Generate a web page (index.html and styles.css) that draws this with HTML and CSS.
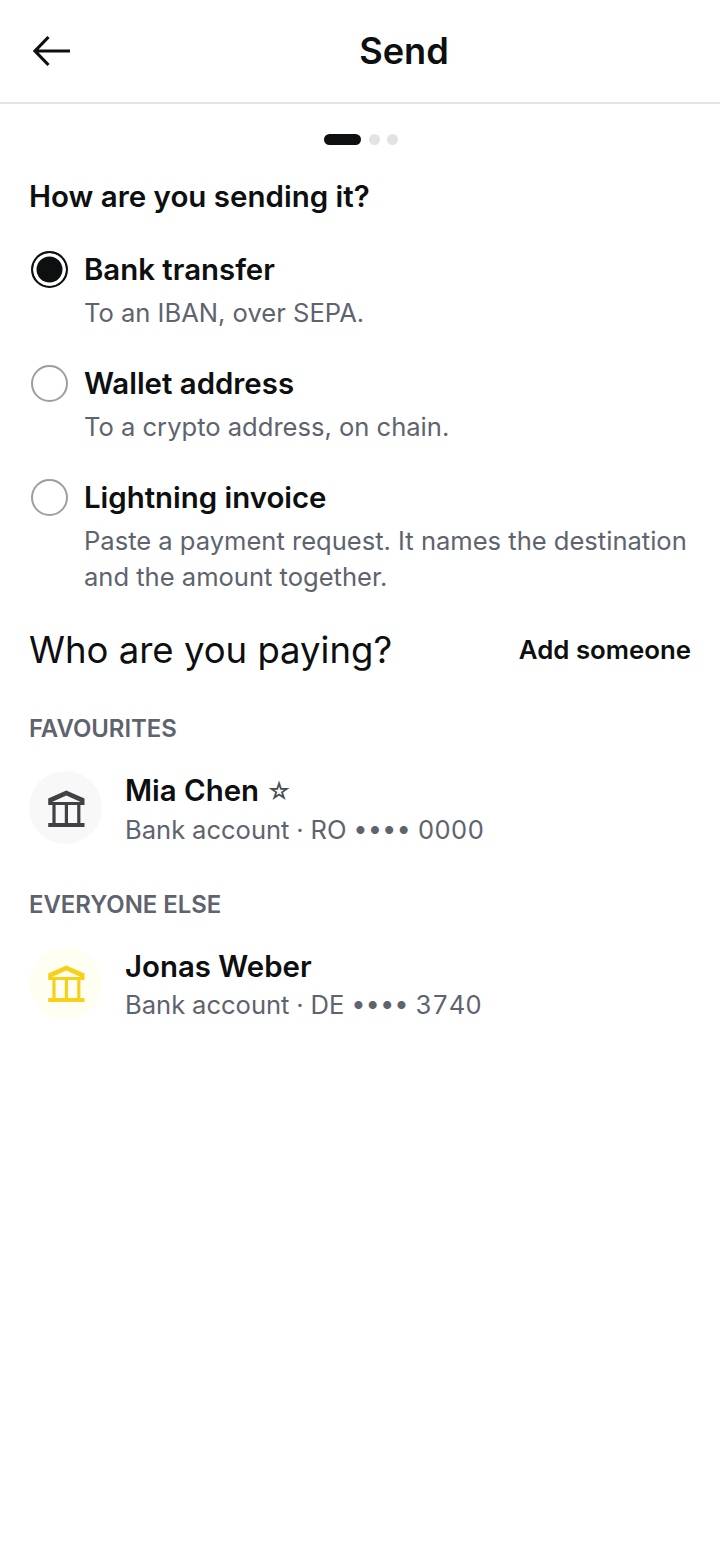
FILE: index.html
```html
<!DOCTYPE html>
<html lang="en">
<head>
<meta charset="utf-8">
<title>Send</title>
<link rel="stylesheet" href="styles.css">
</head>
<body>
<header class="topbar">
  <button class="back" aria-label="Back">
    <svg width="40" height="32" viewBox="0 0 40 32" fill="none" stroke="#0d0f10" stroke-width="3.2"><path d="M39 16H4M17.5 2 4 16l13.5 14"/></svg>
  </button>
  <h1 class="title">Send</h1>
</header>
<div class="steps"><span class="step on"></span><span class="step"></span><span class="step"></span></div>
<main class="content">
  <h2 class="q">How are you sending it?</h2>
  <div class="options">
    <div class="option">
      <span class="radio checked"></span>
      <div class="opt-text"><div class="opt-title">Bank transfer</div><div class="opt-sub">To an IBAN, over SEPA.</div></div>
    </div>
    <div class="option">
      <span class="radio"></span>
      <div class="opt-text"><div class="opt-title">Wallet address</div><div class="opt-sub">To a crypto address, on chain.</div></div>
    </div>
    <div class="option">
      <span class="radio"></span>
      <div class="opt-text"><div class="opt-title">Lightning invoice</div><div class="opt-sub">Paste a payment request. It names the destination and the amount together.</div></div>
    </div>
  </div>
  <div class="who">
    <h2 class="who-title">Who are you paying?</h2>
    <a class="add">Add someone</a>
  </div>
  <div class="group-label first">FAVOURITES</div>
  <div class="person">
    <span class="avatar grey">
      <svg width="40" height="40" viewBox="0 0 40 40"><path class="bank-roof" fill-rule="evenodd" d="M2.2 10.5 20.3 2.5l18.2 8v6.6H2.2zM6 14.1h28.7L20.3 7.6z"/><path class="bank-posts" d="M8 16v19M20.4 16v19M32.8 16v19"/><path class="bank-base" d="M2.2 37h36.3"/></svg>
    </span>
    <div class="who-text"><div class="name">Mia Chen <span class="star">☆</span></div><div class="detail">Bank account · RO •••• 0000</div></div>
  </div>
  <div class="group-label">EVERYONE ELSE</div>
  <div class="person">
    <span class="avatar yellow">
      <svg width="40" height="40" viewBox="0 0 40 40"><path class="bank-roof" fill-rule="evenodd" d="M2.2 10.5 20.3 2.5l18.2 8v6.6H2.2zM6 14.1h28.7L20.3 7.6z"/><path class="bank-posts" d="M8 16v19M20.4 16v19M32.8 16v19"/><path class="bank-base" d="M2.2 37h36.3"/></svg>
    </span>
    <div class="who-text"><div class="name">Jonas Weber</div><div class="detail">Bank account · DE •••• 3740</div></div>
  </div>
</main>
</body>
</html>
```
FILE: styles.css
```css
* { box-sizing: border-box; }
html, body { margin: 0; padding: 0; }
body { width: 720px; height: 1561px; background: #fff; color: #0d0f10; font-family: Inter, sans-serif; overflow: hidden; }
.topbar { height: 104px; display: flex; align-items: center; border-bottom: 2px solid #e2e3e5; padding-left: 31px; }
.back { background: none; border: 0; padding: 0; width: 40px; height: 32px; display: block; }
.back svg { display: block; }
.title { flex: 1; margin: 0; text-align: center; font-size: 36.2px; font-weight: 600; line-height: 40px; padding-left: 17px; }
.steps { display: flex; justify-content: center; gap: 7.5px; margin-top: 30px; padding-left: 2px; }
.step { width: 11px; height: 11px; border-radius: 6px; background: #e2e3e5; }
.step.on { width: 37px; background: #0d0f10; }
.content { padding: 0 29px; }
.q { margin: 31px 0 0; font-size: 29.5px; line-height: 40px; font-weight: 600; }
.options { margin-top: 34px; display: flex; flex-direction: column; gap: 33px; }
.option { display: flex; gap: 16px; padding-left: 2px; }
.radio { flex: none; width: 37px; height: 37px; margin-top: 1px; border-radius: 50%; border: 2px solid #9b9ea3; }
.radio.checked { border-color: #0d0f10; background: #0d0f10; box-shadow: inset 0 0 0 3.5px #fff; }
.opt-title { font-size: 29.4px; line-height: 40px; font-weight: 600; }
.opt-sub { font-size: 25.55px; line-height: 36px; color: #5e636e; margin-top: 5px; }
.who { display: flex; justify-content: space-between; align-items: center; margin-top: 30px; }
.who-title { margin: 0; font-size: 36.5px; font-weight: 400; line-height: 50px; }
.add { font-size: 25.8px; font-weight: 600; margin-bottom: 2px; }
.group-label { font-size: 23.9px; line-height: 32px; font-weight: 600; color: #5e636e; margin-top: 39px; }
.group-label.first { margin-top: 38px; }
.person { display: flex; gap: 23px; align-items: center; margin-top: 20px; }
.avatar { flex: none; width: 73px; height: 73px; border-radius: 50%; display: flex; align-items: center; justify-content: center; }
.avatar.grey { background: #f8f8f8; color: #3f4144; }
.avatar.yellow { background: #fffef2; color: #f7d117; }
.bank-roof { fill: currentColor; }
.bank-posts { fill: none; stroke: currentColor; stroke-width: 3.2; }
.bank-base { fill: none; stroke: currentColor; stroke-width: 3.8; }
.who-text { padding-top: 6px; }
.name { font-size: 29.4px; line-height: 40px; font-weight: 600; }
.star { font-size: 24px; font-weight: 400; color: #4a4d52; vertical-align: 1px; }
.detail { font-size: 25.55px; line-height: 40px; margin-top: -2px; color: #5e636e; font-variant-numeric: tabular-nums; }
```
